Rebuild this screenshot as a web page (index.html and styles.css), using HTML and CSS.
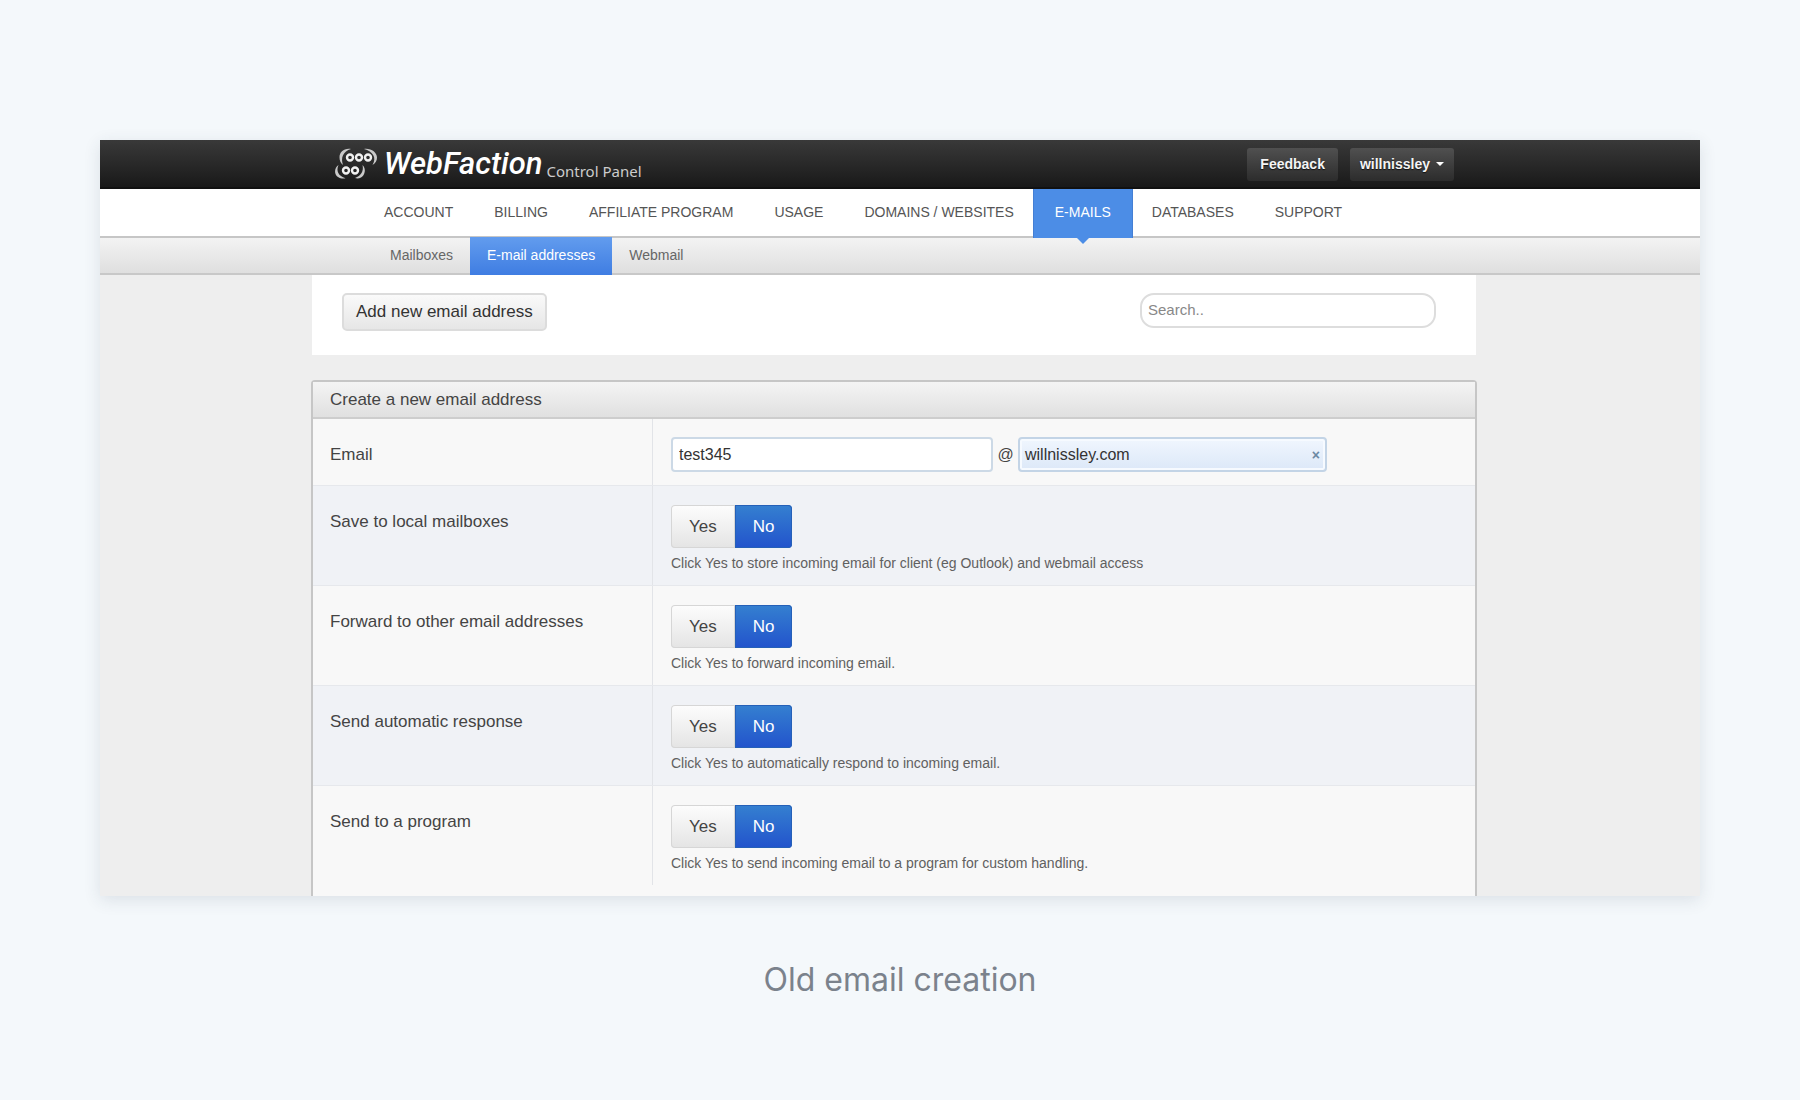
FILE: index.html
```
<!DOCTYPE html>
<html lang="en">
<head>
  <meta charset="UTF-8">
  <meta name="viewport" content="width=device-width, initial-scale=1.0">
  <title>Old email creation</title>
  <link rel="stylesheet" href="styles.css">
</head>
<body>
  <figure class="slide">
    <div class="frame">
      <header class="topbar">
        <div class="wrap topbar-inner">
          <a href="#" class="logo">
            <svg class="logo-mark" width="44" height="34" viewBox="0 0 44 34" fill="none" aria-hidden="true">
              <g stroke="#f0f0f0" stroke-width="2.4">
                <circle cx="16" cy="10.500" r="3"/>
                <circle cx="25" cy="10.500" r="3"/>
                <circle cx="34" cy="10.500" r="3"/>
                <circle cx="12" cy="23.500" r="3"/>
                <circle cx="21" cy="23.500" r="3"/>
              </g>
              <g fill="#c9c9c9">
                <path d="M17 2C10 1 5.500 5 5.500 10.500c0 3 1.200 5.500 3.500 7.500C6.500 10.500 9 4.500 17 2z"/>
                <path d="M30 2c7-1 13 3.500 13 8.500 0 3-1.500 5.500-4.500 7.500C43 10.500 39 4.500 30 2z"/>
                <path d="M4.500 18C0 21 0 27.500 4 30c2.500 1.600 5 1.800 7.500 1.200C4.500 29 1.800 24 4.500 18z"/>
                <path d="M28.500 18c4 3.500 2.500 10.500-1.500 12.500-2 1-4 1.200-6 .5C27 29 30 24 28.500 18z"/>
              </g>
            </svg>
            <span class="logo-name">WebFaction</span>
            <span class="logo-sub">Control Panel</span>
          </a>
          <div class="account">
            <button type="button" class="dark-btn">Feedback</button>
            <button type="button" class="dark-btn user-btn">willnissley <span class="caret"></span></button>
          </div>
        </div>
      </header>

      <nav class="mainnav">
        <div class="wrap mainnav-inner">
          <a href="#">ACCOUNT</a>
          <a href="#">BILLING</a>
          <a href="#">AFFILIATE PROGRAM</a>
          <a href="#">USAGE</a>
          <a href="#">DOMAINS / WEBSITES</a>
          <a href="#" class="active">E-MAILS</a>
          <a href="#">DATABASES</a>
          <a href="#">SUPPORT</a>
        </div>
      </nav>

      <nav class="subnav">
        <div class="wrap subnav-inner">
          <a href="#">Mailboxes</a>
          <a href="#" class="active">E-mail addresses</a>
          <a href="#">Webmail</a>
        </div>
      </nav>

      <main class="content">
        <div class="wrap">
          <div class="toolbar">
            <button type="button" class="add-btn">Add new email address</button>
            <input type="search" class="search" placeholder="Search.." aria-label="Search">
          </div>

          <form class="panel">
            <h2 class="panel-title">Create a new email address</h2>

            <div class="row">
              <label class="row-label" for="email">Email</label>
              <div class="row-field address">
                <input type="text" id="email" class="email-input" value="test345">
                <span class="at">@</span>
                <div class="domain">
                  <span>willnissley.com</span>
                  <button type="button" class="domain-clear" aria-label="Remove domain">×</button>
                </div>
              </div>
            </div>

            <div class="row alt">
              <div class="row-label" id="save-label">Save to local mailboxes</div>
              <div class="row-field">
                <div class="toggle" role="radiogroup" aria-labelledby="save-label">
                  <label><input type="radio" name="save"><span>Yes</span></label>
                  <label><input type="radio" name="save" checked><span>No</span></label>
                </div>
                <p class="hint">Click Yes to store incoming email for client (eg Outlook) and webmail access</p>
              </div>
            </div>

            <div class="row">
              <div class="row-label" id="forward-label">Forward to other email addresses</div>
              <div class="row-field">
                <div class="toggle" role="radiogroup" aria-labelledby="forward-label">
                  <label><input type="radio" name="forward"><span>Yes</span></label>
                  <label><input type="radio" name="forward" checked><span>No</span></label>
                </div>
                <p class="hint">Click Yes to forward incoming email.</p>
              </div>
            </div>

            <div class="row alt">
              <div class="row-label" id="auto-label">Send automatic response</div>
              <div class="row-field">
                <div class="toggle" role="radiogroup" aria-labelledby="auto-label">
                  <label><input type="radio" name="auto"><span>Yes</span></label>
                  <label><input type="radio" name="auto" checked><span>No</span></label>
                </div>
                <p class="hint">Click Yes to automatically respond to incoming email.</p>
              </div>
            </div>

            <div class="row">
              <div class="row-label" id="program-label">Send to a program</div>
              <div class="row-field">
                <div class="toggle" role="radiogroup" aria-labelledby="program-label">
                  <label><input type="radio" name="program"><span>Yes</span></label>
                  <label><input type="radio" name="program" checked><span>No</span></label>
                </div>
                <p class="hint">Click Yes to send incoming email to a program for custom handling.</p>
              </div>
            </div>
          </form>
        </div>
      </main>
    </div>
    <figcaption class="caption">Old email creation</figcaption>
  </figure>
</body>
</html>
```
FILE: styles.css
```
* {
  box-sizing: border-box;
}
body {
  margin: 0;
  background: #f4f8fb;
  color: #444;
  font-family: "Liberation Sans", Arial, sans-serif;
  font-size: 14px;
}
a {
  color: inherit;
  text-decoration: none;
}
button,
input {
  font-family: inherit;
}
.slide {
  margin: 0;
  padding: 140px 100px 0;
}
.frame {
  background: #eee;
  box-shadow: 0 4px 16px rgba(40, 60, 80, 0.12);
}
.wrap {
  max-width: 1164px;
  margin: 0 auto;
}

/* top bar */
.topbar {
  padding-right: 12px;
  background: linear-gradient(#393939, #191919);
  border-bottom: 2px solid #111;
}
.topbar-inner {
  display: flex;
  justify-content: space-between;
  height: 47px;
  padding: 0 22px;
}
.logo {
  display: flex;
  align-items: center;
  color: #fff;
}
.logo-mark {
  margin-right: 6px;
}
.logo-name {
  font-family: Roboto, sans-serif;
  font-size: 31px;
  font-style: italic;
  font-weight: 500;
  line-height: 36px;
}
.logo-sub {
  margin: 14px 0 0 4px;
  color: #ccc;
  font-family: "Noto Sans", sans-serif;
  font-size: 15px;
  line-height: 20px;
}
.account {
  display: flex;
  align-items: flex-start;
  gap: 12px;
  padding-top: 8px;
}
.dark-btn {
  display: flex;
  align-items: center;
  height: 33px;
  padding: 0 13px 2px;
  border: 0;
  border-radius: 3px;
  background: linear-gradient(#505050, #2c2c2c);
  color: #f4f4f4;
  font-size: 14px;
  font-weight: bold;
  text-shadow: 0 1px 1px #111;
}
.user-btn {
  padding: 0 10px 2px;
}
.caret {
  margin-left: 6px;
  border: 4px solid transparent;
  border-top-color: #fff;
  border-bottom: 0;
}

/* main navigation */
.mainnav {
  padding-right: 12px;
  background: #fff;
  border-bottom: 2px solid #c6c6c6;
}
.mainnav-inner {
  display: flex;
  gap: 1px;
  padding-left: 52px;
}
.mainnav a {
  padding: 0 20px;
  color: #555;
  line-height: 47px;
}
.mainnav a.active {
  position: relative;
  margin: 0 -2px -2px;
  padding: 0 21px;
  background: #4c8de6;
  border: 1px solid #447fd4;
  border-width: 0 1px;
  color: #fff;
}
/* pointer under the current section */
.mainnav a.active::after {
  content: "";
  position: absolute;
  top: 100%;
  left: 50%;
  margin-left: -6px;
  border: 6px solid transparent;
  border-top-color: #4c8de6;
  border-bottom: 0;
}

/* second level */
.subnav {
  padding-right: 12px;
  background: linear-gradient(#f3f3f3, #dfdfdf);
  border-bottom: 2px solid #c8c8c8;
}
.subnav-inner {
  display: flex;
  gap: 2px;
  padding-left: 63px;
}
.subnav a {
  padding: 0 15px;
  color: #666;
  line-height: 35px;
}
.subnav a.active {
  margin: -1px 0 -2px;
  padding: 1px 17px 2px;
  background: linear-gradient(#629cee, #3f7de2);
  color: #fff;
}

/* content */
.content {
  padding-right: 12px;
}
.toolbar {
  display: flex;
  justify-content: space-between;
  align-items: flex-start;
  height: 80px;
  padding: 18px 40px 0 30px;
  background: #fff;
}
.add-btn {
  height: 38px;
  padding: 0 12px;
  border: 2px solid #dcdcdc;
  border-radius: 5px;
  background: linear-gradient(#fafafa, #e6e6e6);
  color: #333;
  font-size: 17px;
}
.search {
  width: 296px;
  height: 35px;
  margin: 0;
  padding: 0 6px 3px;
  border: 2px solid #ddd;
  border-radius: 14px;
  background: #fff;
  font-size: 15px;
}
.search::placeholder {
  color: #888;
}
.panel {
  margin: 25px -1px 0;
  padding-bottom: 11px;
  border: 2px solid #c6c6c6;
  border-bottom: 0;
  border-radius: 4px 4px 0 0;
  background: #f8f8f8;
}
.panel-title {
  margin: 0;
  padding: 0 17px;
  border-bottom: 2px solid #cdcdcd;
  background: linear-gradient(#f4f4f4, #e0e0e0);
  color: #444;
  font-size: 17px;
  font-weight: normal;
  line-height: 35px;
}
.row {
  display: flex;
}
.row + .row {
  border-top: 1px solid #e6e8ec;
}
.row.alt {
  background: #f0f2f6;
}
.row-label {
  flex: 0 0 340px;
  padding: 25px 17px 0;
  border-right: 1px solid #e2e4e8;
  font-size: 17px;
  line-height: 22px;
}
.row-field {
  flex: 1;
  padding: 19px 18px 13px;
}
.address {
  display: flex;
  align-items: center;
  padding: 18px 18px 13px;
}
.email-input {
  width: 322px;
  height: 35px;
  padding: 0 6px;
  border: 2px solid #ccd9e6;
  border-radius: 4px;
  background: #fff;
  color: #333;
  font-size: 16px;
}
.at {
  width: 25px;
  font-size: 16px;
  text-align: center;
}
.domain {
  display: flex;
  justify-content: space-between;
  align-items: center;
  width: 309px;
  height: 35px;
  padding: 0 3px 0 5px;
  border: 2px solid #c3d4e6;
  border-radius: 4px;
  background: linear-gradient(#f0f6fe, #dce8f8);
  box-shadow: inset 0 0 0 2px #f6faff;
  color: #333;
  font-size: 16px;
}
.domain-clear {
  padding: 0 2px;
  border: 0;
  background: none;
  color: #6b88a3;
  font-size: 14px;
  font-weight: bold;
}
.toggle {
  display: flex;
  font-size: 17px;
  line-height: 43px;
}
.toggle label {
  position: relative;
}
.toggle input {
  position: absolute;
  opacity: 0;
}
.toggle span {
  display: block;
  padding: 0 18px;
  background: linear-gradient(#fdfdfd, #e4e4e4);
  box-shadow: inset 0 0 0 1px #d6d6d6;
}
.toggle label:first-child span {
  border-radius: 4px 0 0 4px;
}
.toggle label:last-child span {
  border-radius: 0 4px 4px 0;
}
.toggle input:checked + span {
  background: linear-gradient(#3580d0, #2253cc);
  box-shadow: inset 0 0 0 1px #2560b8;
  color: #fff;
}
.hint {
  margin: 6px 0 0;
  color: #606060;
  line-height: 18px;
}

.caption {
  margin-top: 64px;
  color: #7b828c;
  font-family: Inter, sans-serif;
  font-size: 32px;
  line-height: 40px;
  text-align: center;
}
```
